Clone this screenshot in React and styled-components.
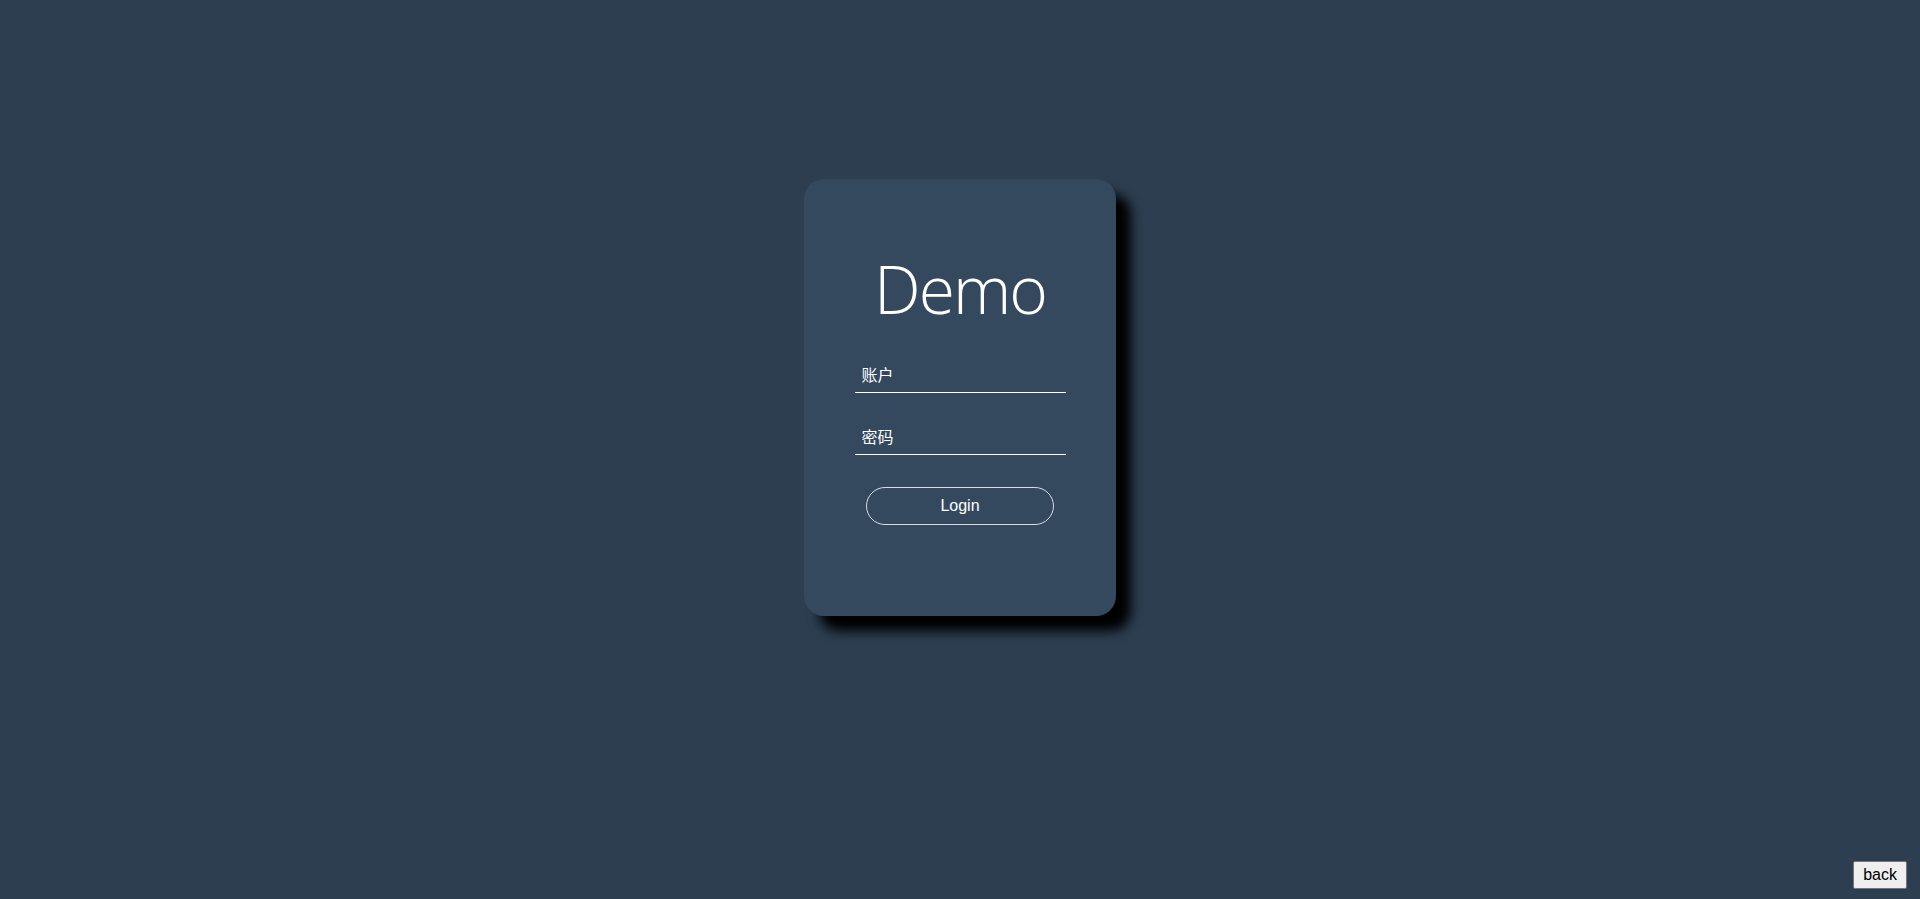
import React from "react";
import styled, { createGlobalStyle } from "styled-components";

const GlobalStyle = createGlobalStyle`
   html, body {
      margin: 0;
      padding: 0;
      height: 100%;
      background: #2c3e50;
   }
`;

const Page = styled.div`
   display: flex;
   justify-content: center;
   align-items: flex-start;
   min-height: 899px;
   padding-top: 179px;
   box-sizing: border-box;
`;

const Card = styled.form`
   display: flex;
   flex-direction: column;
   align-items: center;
   width: 312px;
   height: 437px;
   padding-top: 76px;
   box-sizing: border-box;

   border-radius: 20px;
   background: #34495e;
   box-shadow: 15px 15px 12px rgba(0, 0, 0, 1);
`;

const Title = styled.h1`
   margin: 0 0 34px;
   font-family: "Open Sans", "Noto Sans", sans-serif;
   font-weight: 300;
   font-size: 66px;
   line-height: 66px;
   letter-spacing: -2px;
   color: #ffffff;
`;

const Field = styled.input`
   width: 211px;
   height: 38px;
   margin-bottom: ${props => props.gap}px;
   padding: 0 7px;
   box-sizing: border-box;

   border: none;
   border-bottom: 1px solid #ffffff;
   outline: none;
   background: transparent;

   font-family: "Noto Sans CJK SC", "Noto Sans", sans-serif;
   font-size: 16px;
   color: #ffffff;

   &::placeholder {
      color: #ffffff;
   }
`;

const LoginButton = styled.button`
   width: 188px;
   height: 38px;
   margin-top: 8px;

   border: 1px solid #d8dde2;
   border-radius: 19px;
   background: transparent;

   font-family: "Liberation Sans", Arial, sans-serif;
   font-size: 16px;
   color: #ffffff;
   cursor: pointer;
`;

const BackButton = styled.button`
   position: fixed;
   right: 13px;
   bottom: 10px;
   height: 28px;
   padding: 0 9px;

   border: 1px solid #767676;
   border-radius: 2px;
   background: #efefef;

   font-family: "Liberation Sans", Arial, sans-serif;
   font-size: 16px;
   color: #000000;
`;

const App = () => {
   return (
      <>
         <GlobalStyle />
         <Page>
            <Card onSubmit={e => e.preventDefault()}>
               <Title>Demo</Title>
               <Field type="text" placeholder="账户" gap={24} />
               <Field type="password" placeholder="密码" gap={24} />
               <LoginButton type="submit">Login</LoginButton>
            </Card>
         </Page>
         <BackButton type="button">back</BackButton>
      </>
   );
};

export default App;
